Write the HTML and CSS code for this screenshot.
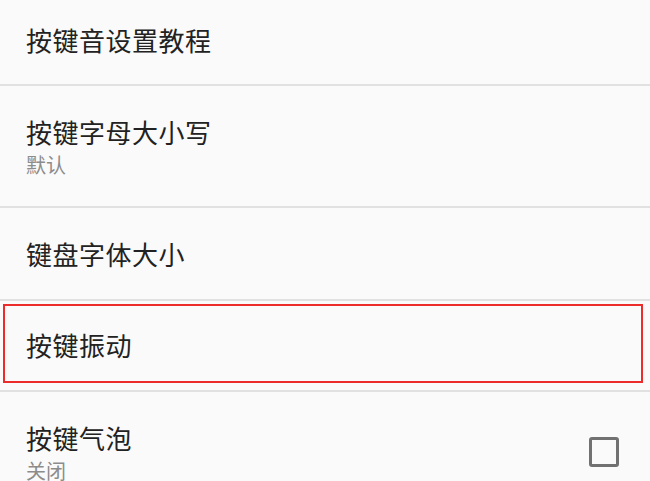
FILE: index.html
```html
<!DOCTYPE html>
<html lang="zh">
<head>
<meta charset="utf-8">
<title>设置</title>
<link rel="stylesheet" href="styles.css">
</head>
<body>
<div class="list">
  <div class="row row-first">
    <div class="title">按键音设置教程</div>
  </div>
  <div class="divider"></div>
  <div class="row row-two">
    <div class="title">按键字母大小写</div>
    <div class="sub">默认</div>
  </div>
  <div class="divider"></div>
  <div class="row row-single">
    <div class="title">键盘字体大小</div>
  </div>
  <div class="divider"></div>
  <div class="row row-highlight">
    <div class="hl-box">
      <div class="title">按键振动</div>
    </div>
  </div>
  <div class="divider"></div>
  <div class="row row-check">
    <div class="texts">
      <div class="title">按键气泡</div>
      <div class="sub">关闭</div>
    </div>
    <div class="checkbox"></div>
  </div>
</div>
</body>
</html>
```

FILE: styles.css
```css
html, body {
  margin: 0;
  padding: 0;
  background: #fafafa;
}
body {
  width: 650px;
  height: 481px;
  overflow: hidden;
  font-family: "Noto Sans CJK SC", "Noto Sans", sans-serif;
}
.list {
  display: flex;
  flex-direction: column;
}
.divider {
  height: 2px;
  background: #e1e1e1;
}
.row {
  display: flex;
  flex-direction: column;
  justify-content: center;
  padding-left: 26px;
  box-sizing: border-box;
}
.title {
  font-size: 26px;
  line-height: 30px;
  color: #222222;
  letter-spacing: 0.5px;
}
.sub {
  font-size: 20px;
  line-height: 24px;
  color: #8c8c8c;
  margin-top: 6px;
}
.row-first {
  height: 84px;
  padding-bottom: 4px;
}
.row-two {
  height: 120px;
  padding-top: 2px;
}
.row-single {
  height: 91px;
}
.row-highlight {
  height: 89px;
  padding: 3px 7px 7px 3px;
}
.hl-box {
  flex: 1;
  border: 2px solid #ec2b2b;
  display: flex;
  align-items: center;
  padding-left: 21px;
  padding-top: 2px;
}
.row-check {
  height: 89px;
  flex-direction: row;
  align-items: flex-start;
  justify-content: space-between;
  padding-top: 31px;
  padding-right: 31px;
}
.texts {
  display: flex;
  flex-direction: column;
}
.checkbox {
  width: 24px;
  height: 24px;
  border: 3px solid #717171;
  border-radius: 3px;
  margin-top: 14px;
}
```
